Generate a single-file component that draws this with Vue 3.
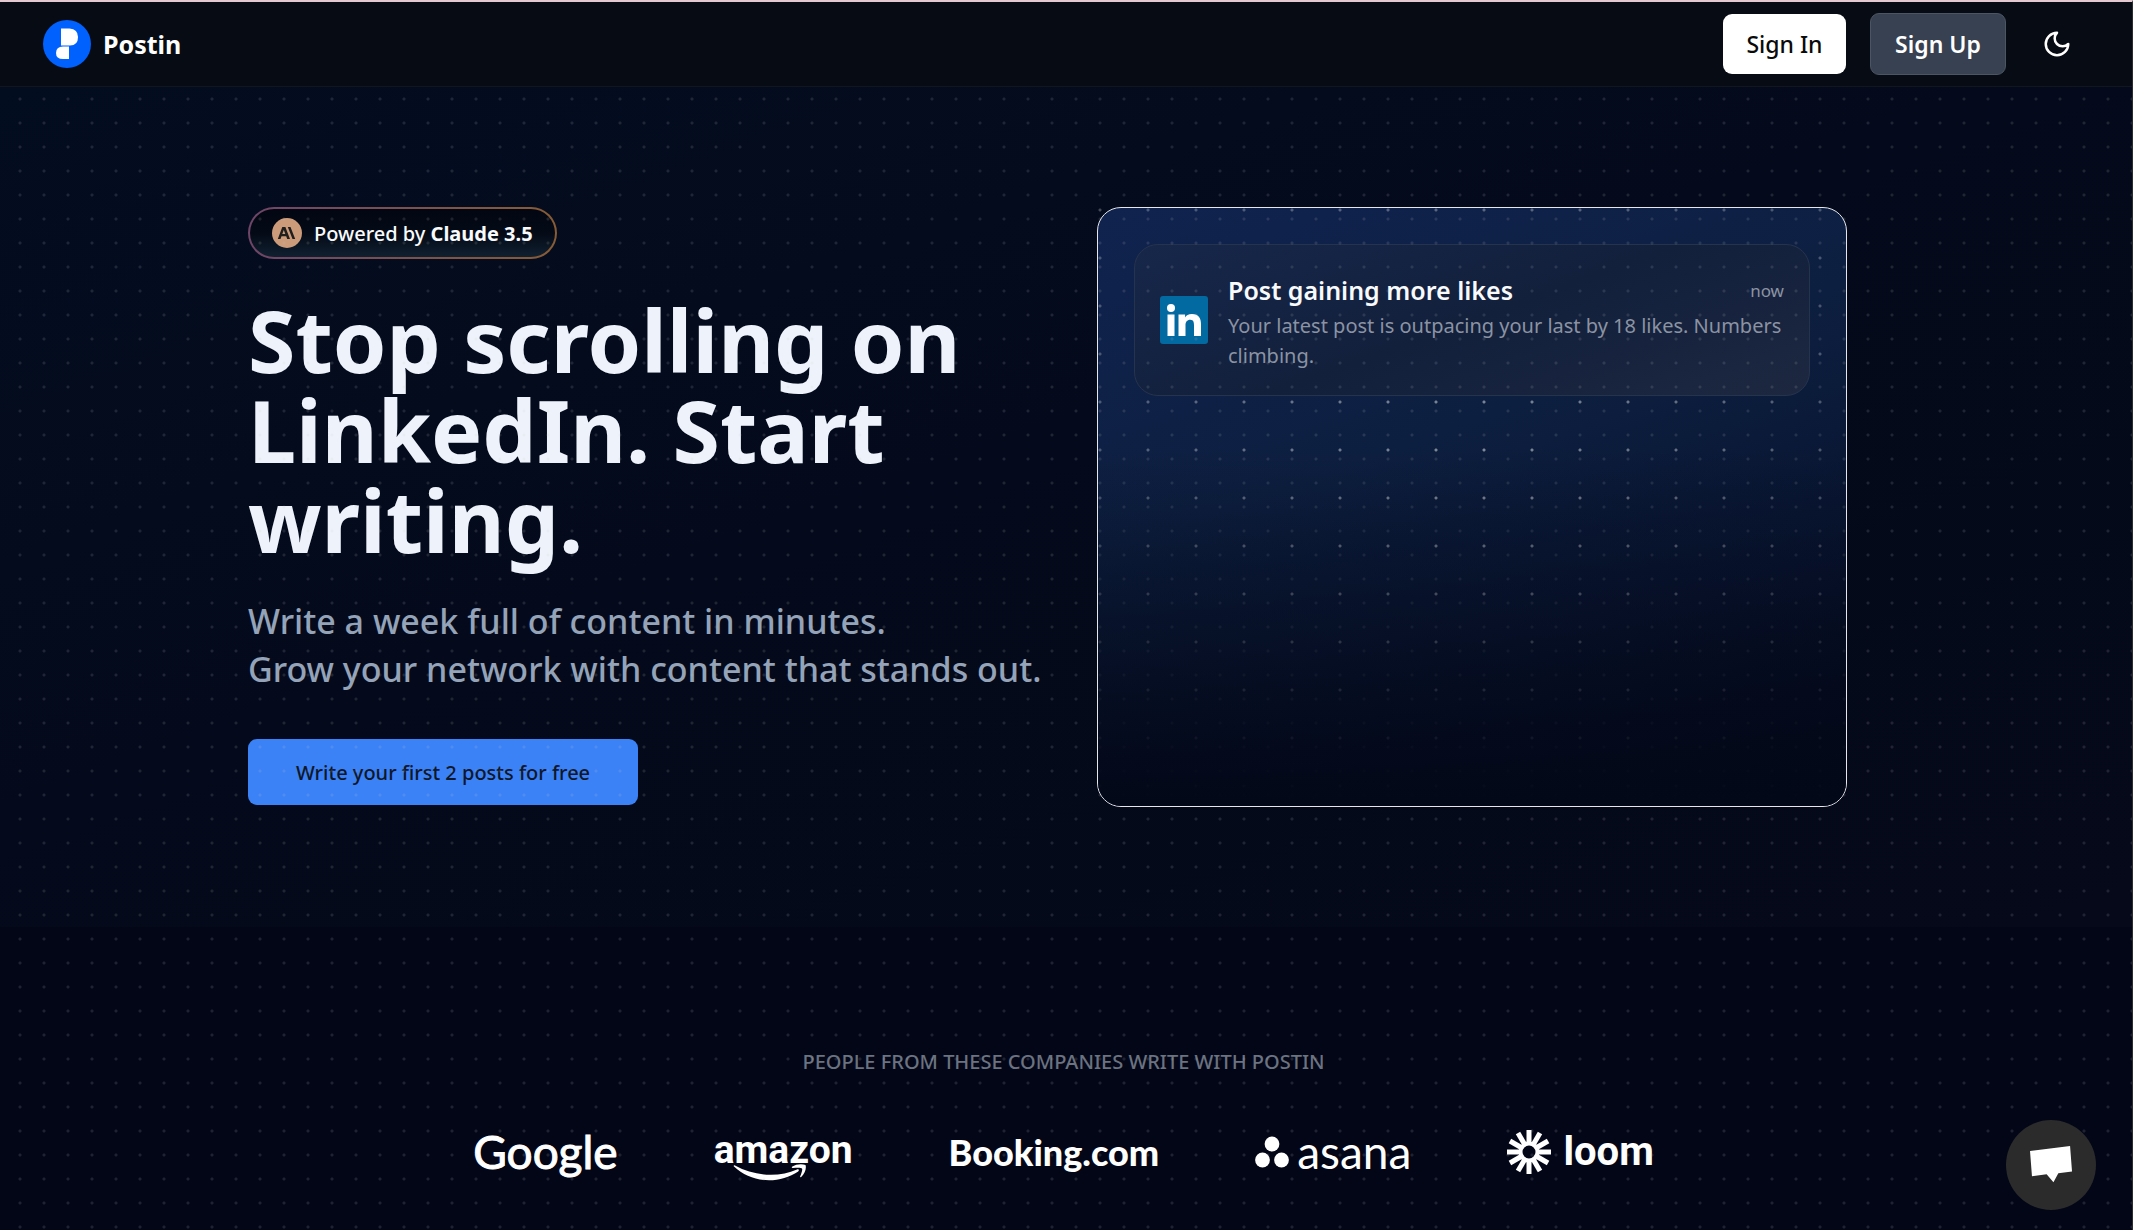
<template>
  <div class="page">
    <header class="topbar">
      <a class="brand" href="#">
        <svg class="brand-mark" viewBox="0 0 48 48" aria-hidden="true">
          <circle cx="24" cy="24" r="24" fill="#0061fe" />
          <path d="M18 8.500H26.500Q35 9 35 17Q35 25.500 27 25.500H18Z" fill="#fff" />
          <path d="M26 26.500H20Q13 26.500 13 33Q13 39 20 39H26Z" fill="#fff" />
        </svg>
        <span>Postin</span>
      </a>
      <nav class="actions">
        <button class="btn btn-light" type="button">Sign In</button>
        <button class="btn btn-dark" type="button">Sign Up</button>
        <button class="theme-toggle" type="button" aria-label="Toggle theme">
          <svg viewBox="0 0 24 24" aria-hidden="true">
            <path d="M12 3a6 6 0 0 0 9 9 9 9 0 1 1-9-9Z" />
          </svg>
        </button>
      </nav>
    </header>

    <main>
      <section class="hero">
        <div class="copy">
          <a class="pill" href="#">
            <svg class="pill-icon" viewBox="0 0 30 30" aria-hidden="true">
              <circle cx="15" cy="15" r="15" fill="#cc9b7a" />
              <path d="M10.300 9h3.100l4.600 12h-2.800l-1-2.700H9.500L8.500 21H5.800ZM10.300 16h3L11.800 12ZM15.800 9h2.700L23.200 21h-2.700Z" fill="#1f1f1e" fill-rule="evenodd" />
            </svg>
            <span>Powered by <strong>Claude 3.5</strong></span>
          </a>
          <h1>Stop scrolling on<br>LinkedIn. Start<br>writing.</h1>
          <p class="lead">
            Write a week full of content in minutes.<br>
            Grow your network with content that stands out.
          </p>
          <button class="cta" type="button">Write your first 2 posts for free</button>
        </div>

        <div class="showcase">
          <article v-for="item in notifications" :key="item.title" class="notice">
            <svg class="notice-icon" viewBox="0 0 48 48" aria-hidden="true">
              <rect width="48" height="48" rx="3" fill="#0369a1" />
              <circle cx="11" cy="12" r="4" fill="#fff" />
              <path d="M7.500 18.500h7V40h-7ZM18.500 18.500h6.600v3c1-2 3.300-3.500 6.800-3.500 7 0 9.100 4.300 9.100 10.500V40h-7V29.500c0-3-.3-5.800-3.700-5.800s-4.800 2.300-4.800 5.600V40h-7Z" fill="#fff" />
            </svg>
            <div class="notice-body">
              <div class="notice-head">
                <h2>{{ item.title }}</h2>
                <time>{{ item.time }}</time>
              </div>
              <p>{{ item.text }}</p>
            </div>
          </article>
        </div>
      </section>

      <section class="companies">
        <h3>People from these companies write with Postin</h3>
        <ul>
          <li class="google">Google</li>
          <li class="amazon">
            <span>amazon</span>
            <svg viewBox="0 0 74 18" aria-hidden="true">
              <path d="M1 2.500C.2 1.800 1 .9 2 1.500 22 12.500 46 13.500 64 5.500c1.600-.6 2.600.8 1.200 1.900C46 20.500 18 19 1 2.500Z" />
              <path d="M59 2.800C63 0 69-.3 72.500 1c1.200 3-.6 8.500-4.300 12-.8.600-1.400.2-1-.7 1-2.500 2.600-6.500 1.800-7.800-1-1.200-5.500-.8-9-.4-1 .1-1.600-.7-1-1.300Z" />
            </svg>
          </li>
          <li class="booking">Booking.com</li>
          <li class="asana">
            <svg viewBox="0 0 34 32" aria-hidden="true">
              <circle cx="17" cy="8" r="7.400" />
              <circle cx="7.500" cy="24" r="7.400" />
              <circle cx="26.500" cy="24" r="7.400" />
            </svg>
            <span>asana</span>
          </li>
          <li class="loom">
            <svg viewBox="0 0 44 44" aria-hidden="true">
              <rect v-for="n in 12" :key="n" x="19.500" y="0" width="5" height="16" :transform="`rotate(${n * 30} 22 22)`" />
              <circle class="ring" cx="22" cy="22" r="8.500" />
            </svg>
            <span>loom</span>
          </li>
        </ul>
      </section>
    </main>

    <button class="chat" type="button" aria-label="Open chat">
      <svg viewBox="0 0 44 38" aria-hidden="true">
        <path d="M0 5 41 0 43 26 29 28 24 37 17 29 2 31Z" />
      </svg>
    </button>
  </div>
</template>

<script setup>
const notifications = [
  {
    title: 'Post gaining more likes',
    time: 'now',
    text: 'Your latest post is outpacing your last by 18 likes. Numbers climbing.'
  }
]
</script>

<style>
body {
  margin: 0;
  background: #020617;
}
</style>

<style scoped>
* {
  box-sizing: border-box;
}

.page {
  position: relative;
  min-height: 100vh;
  overflow: hidden;
  border-top: 2px solid #e4c9d0;
  border-right: 1px solid #2b2c31;
  background: #020617;
  color: #fff;
  font-family: "Noto Sans", "Open Sans", sans-serif;
}

/* dot grid laid over the content */
.page::after {
  content: "";
  position: absolute;
  z-index: 1;
  inset: 84px 0 0;
  pointer-events: none;
  background: radial-gradient(circle at 12px 12px, rgba(200, 200, 200, 0.14) 1px, transparent 2px) 8px 1px / 24px 24px;
}

button {
  border: 0;
  font-family: inherit;
  cursor: pointer;
}

.topbar {
  display: flex;
  align-items: center;
  justify-content: space-between;
  height: 85px;
  padding: 0 60px 0 43px;
  border-bottom: 1px solid #12161f;
  background: #070b13;
}

.brand {
  display: flex;
  align-items: center;
  gap: 12px;
  color: #fff;
  font-size: 25px;
  font-weight: 700;
  text-decoration: none;
}

.brand-mark {
  width: 48px;
  height: 48px;
}

.actions {
  display: flex;
  align-items: center;
}

.btn {
  height: 60px;
  border-radius: 9px;
  font-size: 23px;
  font-weight: 500;
}

.btn-light {
  width: 123px;
  margin-right: 24px;
  background: #fff;
  color: #0a0a0a;
}

.btn-dark {
  width: 136px;
  height: 62px;
  margin-right: 36px;
  border: 1px solid #4b5563;
  background: #374151;
  color: #fff;
  font-weight: 600;
}

.theme-toggle {
  display: flex;
  padding: 0;
  background: none;
}

.theme-toggle svg {
  width: 30px;
  height: 30px;
  fill: none;
  stroke: #fff;
  stroke-width: 2;
  stroke-linecap: round;
  stroke-linejoin: round;
}

.hero {
  display: flex;
  justify-content: space-between;
  padding: 120px 285px 120px 248px;
  background: linear-gradient(160deg, #030d20 0%, #040a1b 45%, #050919 100%);
}

.copy {
  display: flex;
  flex-direction: column;
  align-items: flex-start;
}

.pill {
  display: flex;
  align-items: center;
  gap: 12px;
  height: 52px;
  padding: 0 22px;
  border: 2px solid transparent;
  border-radius: 26px;
  background: linear-gradient(#020613, #040a16 50%, #102030) padding-box, linear-gradient(90deg, #6f4568, #875c35) border-box;
  color: #f8fafc;
  font-size: 20px;
  font-weight: 500;
  text-decoration: none;
}

.pill-icon {
  width: 30px;
  height: 30px;
}

h1 {
  margin: 36px 0 0;
  color: #eef2fa;
  font-size: 86px;
  font-weight: 700;
  line-height: 90px;
}

.lead {
  margin: 32px 0 46px;
  color: #94a3b8;
  font-size: 34px;
  font-weight: 500;
  line-height: 48px;
}

.cta {
  height: 66px;
  padding: 0 48px;
  border-radius: 9px;
  background: #3b82f6;
  color: #0f172a;
  font-size: 20px;
  font-weight: 500;
}

.showcase {
  position: relative;
  width: 750px;
  height: 600px;
  padding: 36px;
  border: 1px solid #e5e7eb;
  border-radius: 24px;
  background: linear-gradient(160deg, #10234f 0%, #0d1f40 40%, #081430 70%, #040819 100%);
}

/* wider dot grid, dimmer towards the edges */
.showcase::before {
  content: "";
  position: absolute;
  inset: 0;
  background: radial-gradient(circle at 24px 24px, rgba(255, 255, 255, 0.5) 1px, transparent 2px) -22px -22px / 48px 48px;
  mask-image: radial-gradient(ellipse at 50% 45%, #000, rgba(0, 0, 0, 0.5) 75%);
}

/* fades both grids out at the bottom of the card */
.showcase::after {
  content: "";
  position: absolute;
  z-index: 2;
  inset: 0;
  border-radius: 23px;
  pointer-events: none;
  background: linear-gradient(transparent 40%, #030818 100%);
}

.notice {
  position: relative;
  display: flex;
  align-items: center;
  gap: 20px;
  padding: 24px 25px;
  border: 1px solid #26334c;
  border-radius: 24px;
  background: linear-gradient(160deg, #17274a, #12203c 50%, #1d2740);
}

.notice-icon {
  flex: none;
  width: 48px;
  height: 48px;
}

.notice-body {
  flex: 1;
}

.notice-head {
  display: flex;
  align-items: center;
  justify-content: space-between;
}

h2 {
  margin: 0;
  color: #f8fafc;
  font-size: 25px;
  font-weight: 600;
  line-height: 42px;
}

time {
  color: #8b93a3;
  font-size: 17px;
}

.notice p {
  margin: 0;
  color: #8b93a3;
  font-size: 20px;
  line-height: 30px;
}

.companies {
  padding: 120px 5px 36px 0;
}

h3 {
  margin: 0;
  color: #6b7280;
  font-size: 20px;
  font-weight: 500;
  line-height: 30px;
  text-align: center;
  text-transform: uppercase;
}

ul {
  display: flex;
  align-items: center;
  justify-content: center;
  gap: 96px;
  margin: 45px 0 0;
  padding: 0;
  list-style: none;
}

li {
  display: flex;
  align-items: center;
  height: 60px;
  line-height: 60px;
}

li svg {
  fill: #fff;
}

.google {
  font-family: Lato, sans-serif;
  font-size: 46px;
  -webkit-text-stroke: 1px #fff;
}

.amazon {
  position: relative;
  align-items: flex-start;
  font-family: Roboto, sans-serif;
  font-size: 39px;
  font-weight: 700;
  line-height: 56px;
}

.amazon svg {
  position: absolute;
  top: 42px;
  left: 19px;
  width: 74px;
}

.booking {
  font-family: Lato, sans-serif;
  font-size: 36px;
  font-weight: 900;
}

.asana {
  gap: 8px;
  font-family: Lato, sans-serif;
  font-size: 46px;
}

.asana svg {
  width: 34px;
}

.loom {
  gap: 12px;
  font-family: Roboto, sans-serif;
  font-size: 40px;
  font-weight: 700;
}

.loom svg {
  width: 44px;
}

.loom .ring {
  fill: #020617;
  stroke: #fff;
  stroke-width: 4;
}

.chat {
  position: fixed;
  z-index: 3;
  right: 37px;
  bottom: 20px;
  display: flex;
  align-items: center;
  justify-content: center;
  width: 90px;
  height: 90px;
  border-radius: 50%;
  background: #2b2b2b;
}

.chat svg {
  width: 43px;
  fill: #fff;
}
</style>
